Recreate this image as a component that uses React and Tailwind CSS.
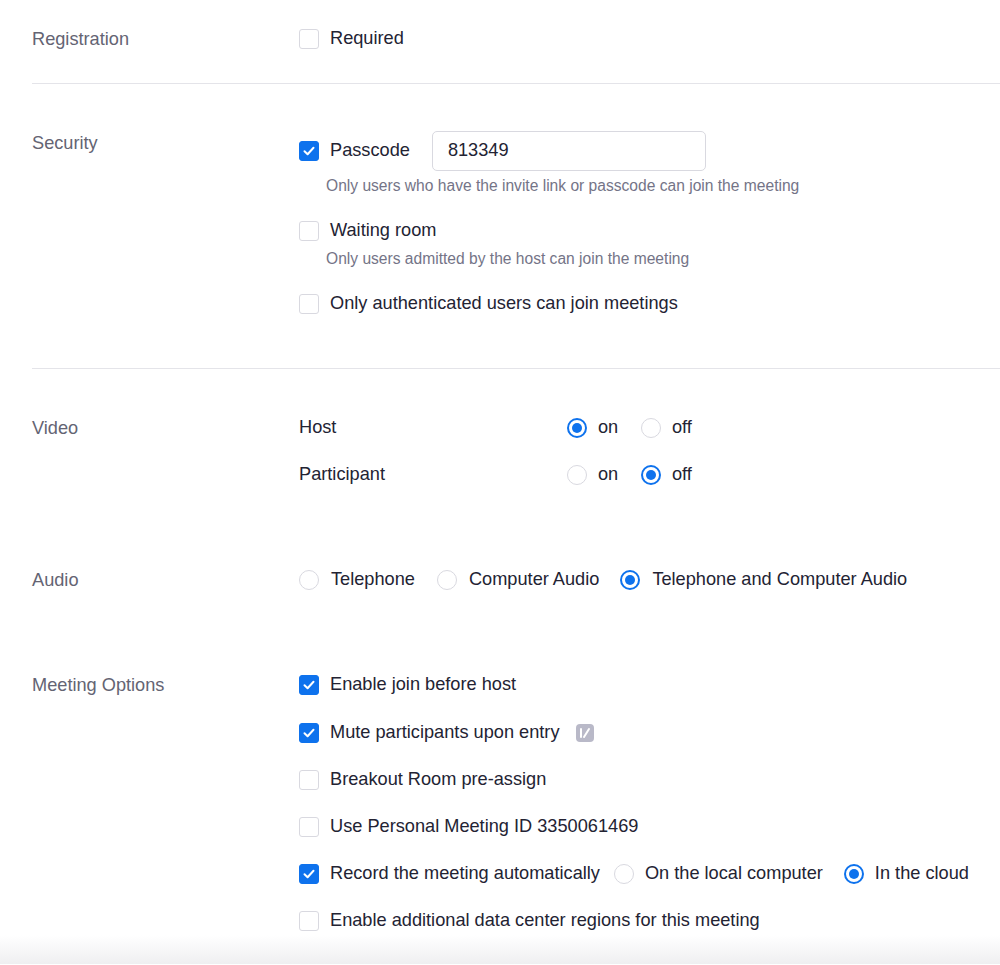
import React from "react";

const Check = ({ on }) => (
  <span className={"flex h-[20px] w-[20px] shrink-0 items-center justify-center rounded-[3px] border " + (on ? "border-[#0e72ed] bg-[#0e72ed]" : "border-[#d9d9e0] bg-white")}>
    {on && (
      <svg width="12" height="10" viewBox="0 0 12 10"><path d="M1.5 5.2 4.6 8.2 10.5 1.8" fill="none" stroke="white" strokeWidth="2" strokeLinecap="round" strokeLinejoin="round" /></svg>
    )}
  </span>
);
const Radio = ({ on }) => (
  <span className={"flex h-[20px] w-[20px] shrink-0 items-center justify-center rounded-full border " + (on ? "border-[#0e72ed] border-2" : "border-[#d9d9e0]")}>
    {on && <span className="h-[10px] w-[10px] rounded-full bg-[#0e72ed]" />}
  </span>
);
const CRow = ({ on, children, className = "" }) => (
  <div className={"flex h-[24px] items-center gap-[11px] " + className}>
    <Check on={on} />
    {children}
  </div>
);
const Label = ({ children }) => (
  <div className="h-[24px] w-[267px] shrink-0 leading-[24px] text-[#646473]">{children}</div>
);
const Hint = ({ children, className = "" }) => (
  <div className={"h-[20px] pl-[27px] text-[15.6px] leading-[20px] text-[#747487] " + className}>{children}</div>
);

export default function App() {
  return (
    <div className="min-h-[965px] bg-white text-[18.2px] text-[#232333]" style={{ fontFamily: '"Liberation Sans", Arial, sans-serif' }}>
      <div className="ml-[32px]">
        <div className="flex pt-[27px] pb-[32px]">
          <Label>Registration</Label>
          <CRow>Required</CRow>
        </div>
        <div className="h-px bg-[#e4e4e9]" />
        <div className="flex pt-[47px] pb-[52px]">
          <Label>Security</Label>
          <div>
            <div className="flex h-[40px] items-center gap-[11px]">
              <Check on />
              <span>Passcode</span>
              <div className="ml-[11px] flex h-[40px] w-[274px] items-center rounded-[5px] border border-[#d9d9e0] px-[15px]">813349</div>
            </div>
            <Hint className="mt-[5px]">Only users who have the invite link or passcode can join the meeting</Hint>
            <CRow className="mt-[23px]">Waiting room</CRow>
            <Hint className="mt-[6px]">Only users admitted by the host can join the meeting</Hint>
            <CRow className="mt-[23px]">Only authenticated users can join meetings</CRow>
          </div>
        </div>
        <div className="h-px bg-[#e4e4e9]" />
        <div className="flex pt-[47px]">
          <Label>Video</Label>
          <div className="flex flex-col gap-[23px]">
            {[["Host", true], ["Participant", false]].map(([n, v]) => (
              <div key={n} className="flex h-[24px] items-center">
                <span className="w-[268px]">{n}</span>
                <div className="flex w-[74px] items-center gap-[11px]"><Radio on={v} />on</div>
                <div className="flex items-center gap-[11px]"><Radio on={!v} />off</div>
              </div>
            ))}
          </div>
        </div>
        <div className="mt-[81px] flex">
          <Label>Audio</Label>
          <div className="flex h-[24px] items-center">
            <Radio /><span className="ml-[12px] mr-[22px]">Telephone</span>
            <Radio /><span className="ml-[12px] mr-[21px]">Computer Audio</span>
            <Radio on /><span className="ml-[12px]">Telephone and Computer Audio</span>
          </div>
        </div>
        <div className="mt-[81px] flex">
          <Label>Meeting Options</Label>
          <div className="flex flex-col gap-[23px]">
            <CRow on className="mb-[1px]">Enable join before host</CRow>
            <CRow on>
              Mute participants upon entry
              <svg className="ml-[5px]" width="18" height="18" viewBox="0 0 18 18">
                <rect width="18" height="18" rx="4" fill="#b9b9c8" />
                <path d="M5 5v8M8 13l5-8" stroke="white" strokeWidth="2" fill="none" strokeLinecap="round" />
              </svg>
            </CRow>
            <CRow>Breakout Room pre-assign</CRow>
            <CRow>Use Personal Meeting ID 3350061469</CRow>
            <CRow on>
              Record the meeting automatically
              <span className="ml-[3px]"><Radio /></span>
              <span className="mr-[10px]">On the local computer</span>
              <Radio on />
              In the cloud
            </CRow>
            <CRow>Enable additional data center regions for this meeting</CRow>
          </div>
        </div>
      </div>
      <div className="mt-[2px] h-[29px] bg-gradient-to-b from-white to-[#efeff1]" />
    </div>
  );
}
